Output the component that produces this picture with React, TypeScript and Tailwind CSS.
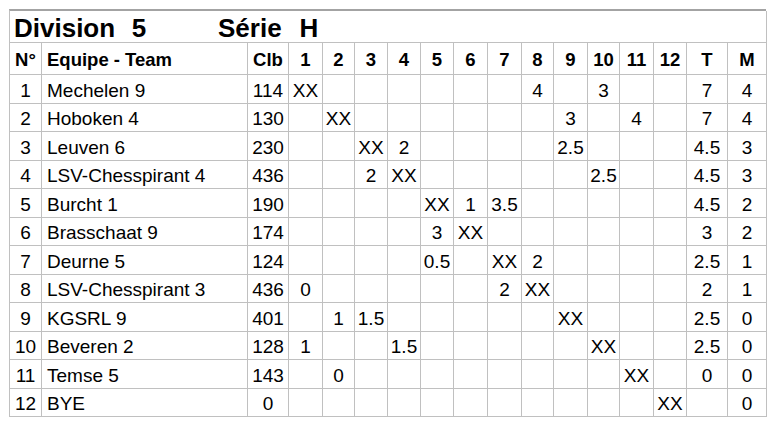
const teams = [
  { nr: 1, name: 'Mechelen 9', clb: '114', res: { 1: 'XX', 8: '4', 10: '3' }, t: '7', m: '4' },
  { nr: 2, name: 'Hoboken 4', clb: '130', res: { 2: 'XX', 9: '3', 11: '4' }, t: '7', m: '4' },
  { nr: 3, name: 'Leuven 6', clb: '230', res: { 3: 'XX', 4: '2', 9: '2.5' }, t: '4.5', m: '3' },
  { nr: 4, name: 'LSV-Chesspirant 4', clb: '436', res: { 3: '2', 4: 'XX', 10: '2.5' }, t: '4.5', m: '3' },
  { nr: 5, name: 'Burcht 1', clb: '190', res: { 5: 'XX', 6: '1', 7: '3.5' }, t: '4.5', m: '2' },
  { nr: 6, name: 'Brasschaat 9', clb: '174', res: { 5: '3', 6: 'XX' }, t: '3', m: '2' },
  { nr: 7, name: 'Deurne 5', clb: '124', res: { 5: '0.5', 7: 'XX', 8: '2' }, t: '2.5', m: '1' },
  { nr: 8, name: 'LSV-Chesspirant 3', clb: '436', res: { 1: '0', 7: '2', 8: 'XX' }, t: '2', m: '1' },
  { nr: 9, name: 'KGSRL 9', clb: '401', res: { 2: '1', 3: '1.5', 9: 'XX' }, t: '2.5', m: '0' },
  { nr: 10, name: 'Beveren 2', clb: '128', res: { 1: '1', 4: '1.5', 10: 'XX' }, t: '2.5', m: '0' },
  { nr: 11, name: 'Temse 5', clb: '143', res: { 2: '0', 11: 'XX' }, t: '0', m: '0' },
  { nr: 12, name: 'BYE', clb: '0', res: { 12: 'XX' }, t: '', m: '0' },
] as { nr: number; name: string; clb: string; res: Record<number, string>; t: string; m: string }[];

const rounds = [1, 2, 3, 4, 5, 6, 7, 8, 9, 10, 11, 12];

const cell = 'flex items-center justify-center border-r border-b border-[#c0c0c0] pt-[3px] leading-none';

export default function App() {
  return (
    <div
      className="min-h-[427px] bg-white text-black pl-[9px] pt-[9px]"
      style={{ fontFamily: '"Liberation Sans", Arial, sans-serif' }}
    >
      <div className="grid w-[757px] grid-cols-[32px_206px_41px_34px_32px_33px_33px_33px_34px_34px_32px_34px_32px_34px_33px_41px_39px] grid-rows-[32px_32px_repeat(12,28.5px)] border-l border-l-[#c0c0c0] border-t-2 border-t-[#a3a3a3]">
        {/* titel */}
        <div className="col-span-full flex items-center border-r border-b border-[#c0c0c0] pl-[4px] pt-[2px] text-[26px] font-bold leading-none">
          <span className="w-[110px]">Division</span>
          <span className="w-[30px] text-center">5</span>
          <span className="ml-[64px]">Série</span>
          <span className="ml-[18px]">H</span>
        </div>

        {/* kop */}
        <div className={`${cell} text-[18.5px] font-bold`}>N°</div>
        <div className={`${cell} !justify-start pl-[5px] text-[18.5px] font-bold`}>Equipe - Team</div>
        <div className={`${cell} text-[18.5px] font-bold`}>Clb</div>
        {rounds.map((r) => (
          <div key={r} className={`${cell} text-[18.5px] font-bold`}>
            {r}
          </div>
        ))}
        <div className={`${cell} text-[18.5px] font-bold`}>T</div>
        <div className={`${cell} text-[18.5px] font-bold`}>M</div>

        {/* ploegen */}
        {teams.map((team) => (
          <div key={team.nr} className="contents">
            <div className={`${cell} text-[19px]`}>{team.nr}</div>
            <div className={`${cell} !justify-start pl-[5px] text-[19px]`}>{team.name}</div>
            <div className={`${cell} text-[19px]`}>{team.clb}</div>
            {rounds.map((r) => (
              <div key={r} className={`${cell} text-[19px]`}>
                {team.res[r] ?? ''}
              </div>
            ))}
            <div className={`${cell} text-[19px]`}>{team.t}</div>
            <div className={`${cell} text-[19px]`}>{team.m}</div>
          </div>
        ))}
      </div>
    </div>
  );
}
